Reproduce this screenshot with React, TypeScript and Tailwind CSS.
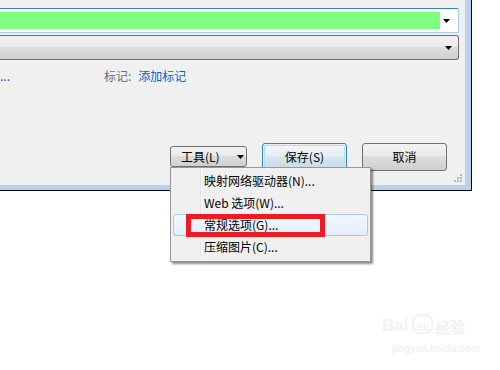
import React from "react";

const font = { fontFamily: '"Noto Sans CJK SC", "Noto Sans", sans-serif' };

function Arrow() {
  return (
    <svg width="8" height="5" viewBox="0 0 8 5">
      <path d="M0 0 H7 L3.5 4 Z" fill="#000" />
    </svg>
  );
}

function MenuItem({ label, hl }: { label: string; hl?: boolean }) {
  return (
    <div
      className={
        "h-[22px] flex items-center rounded-[3px] border " +
        (hl
          ? "border-[#a8c8ee] bg-[linear-gradient(#f3f7fd,#e3edfa)]"
          : "border-transparent")
      }
    >
      <div className="w-[26px] h-full" />
      <div className="pl-[4px] text-[12px] text-black leading-none">{label}</div>
    </div>
  );
}

export default function App() {
  return (
    <div className="relative w-[500px] h-[370px] bg-white overflow-hidden" style={font}>
      {/* window */}
      <div className="w-[472px] h-[191px] bg-[#b9d1ea] border-r border-b border-black pr-[6px] pb-[5px] flex flex-col">
        <div className="flex-1 bg-[#f0f0f0] flex flex-col pt-[8px]">
          {/* combo 1 */}
          <div className="w-[459px] h-[25px] border border-l-0 border-[#a3cde9] border-t-[#3c7fb1] rounded-tr-[2px] bg-white flex items-center pr-[4px]">
            <div className="w-[440px] h-[17px] bg-[#80ff80]" />
            <div className="flex-1 flex justify-center pt-[2px]">
              <Arrow />
            </div>
          </div>
          {/* combo 2 */}
          <div className="mt-[2px] w-[459px] h-[25px] border border-l-0 border-[#707070] rounded-r-[3px] bg-[linear-gradient(#f2f2f2_0%,#ebebeb_45%,#dddddd_50%,#cfcfcf_100%)] flex items-center justify-end pr-[4px]">
            <div className="w-[10px] flex justify-center pt-[2px]">
              <Arrow />
            </div>
          </div>
          {/* text row */}
          <div className="h-[16px] mt-[8px] flex items-center text-[12px] leading-none">
            <div className="w-[104px]">
              <span className="text-[#0066cc]">...</span>
            </div>
            <span className="text-[#6d6d6d]">标记:</span>
            <span className="ml-[7px] text-[#0066cc]">添加标记</span>
          </div>
          {/* buttons */}
          <div className="mt-[59px] flex items-start">
            <div className="ml-[170px] mt-[3px] w-[77px] h-[21px] border border-[#707070] rounded-[3px] bg-[linear-gradient(#f2f2f2_0%,#ebebeb_45%,#dddddd_50%,#cfcfcf_100%)] flex items-center text-[12px] leading-none">
              <span className="ml-[10px]">工具(L)</span>
              <span className="ml-[17px] pt-[1px]">
                <Arrow />
              </span>
            </div>
            <div className="ml-[15px] w-[85px] h-[28px] border border-[#3c7fb1] rounded-[3px] p-[1px]">
              <div className="w-full h-full rounded-[2px] border border-[#a7e3f7] bg-[linear-gradient(#f0f6f9_0%,#e6eef3_45%,#d7e5ee_50%,#c9dce8_100%)] flex items-center justify-center text-[12px] leading-none">
                保存(S)
              </div>
            </div>
            <div className="ml-[15px] w-[85px] h-[28px] border border-[#707070] rounded-[3px] bg-[linear-gradient(#f2f2f2_0%,#ebebeb_45%,#dddddd_50%,#cfcfcf_100%)] flex items-center justify-center text-[12px] leading-none">
              取消
            </div>
          </div>
          {/* grip */}
          <div className="flex justify-end pr-[3px] mt-[1px]">
            <svg width="10" height="10" viewBox="0 0 10 10">
              {[
                [8, 2],
                [5, 5],
                [8, 5],
                [2, 8],
                [5, 8],
                [8, 8],
              ].map(([x, y], i) => (
                <rect key={i} x={x} y={y} width="2" height="2" fill="#b8b8b8" />
              ))}
            </svg>
          </div>
        </div>
      </div>

      {/* dropdown menu */}
      <div className="absolute left-[170px] top-[167px] w-[201px] h-[95px] border border-[#979797] bg-[#f0f0f0] p-[2px] shadow-[2px_2px_2px_rgba(0,0,0,0.45)]">
        <div className="absolute left-[29px] top-[2px] bottom-[2px] w-[2px] border-l border-[#e2e3e3] bg-white" />
        <div className="relative flex flex-col">
          <MenuItem label="映射网络驱动器(N)..." />
          <MenuItem label="Web 选项(W)..." />
          <MenuItem label="常规选项(G)..." hl />
          <MenuItem label="压缩图片(C)..." />
        </div>
      </div>

      {/* red highlight box */}
      <div className="absolute left-[186px] top-[214px] w-[139px] h-[23px] border-[5px] border-[#ed1c24]" />

      {/* watermark */}
      <div className="absolute left-[382px] top-[314px] text-[#f1f1f1] select-none flex flex-col items-start">
        <div className="flex items-end leading-none">
          <span className="text-[17px] font-bold" style={{ fontFamily: '"Liberation Sans", sans-serif' }}>
            Bai
          </span>
          <span className="ml-[4px] text-[10px] font-bold border-2 border-[#f1f1f1] rounded-[7px] px-[2px] pt-[6px]">du</span>
          <span className="ml-[2px] text-[15px] font-bold">经验</span>
        </div>
        <div className="mt-[10px] ml-[10px] text-[10px] leading-none font-bold" style={{ fontFamily: '"Liberation Sans", sans-serif' }}>
          jingyan.baidu.com
        </div>
      </div>
    </div>
  );
}
